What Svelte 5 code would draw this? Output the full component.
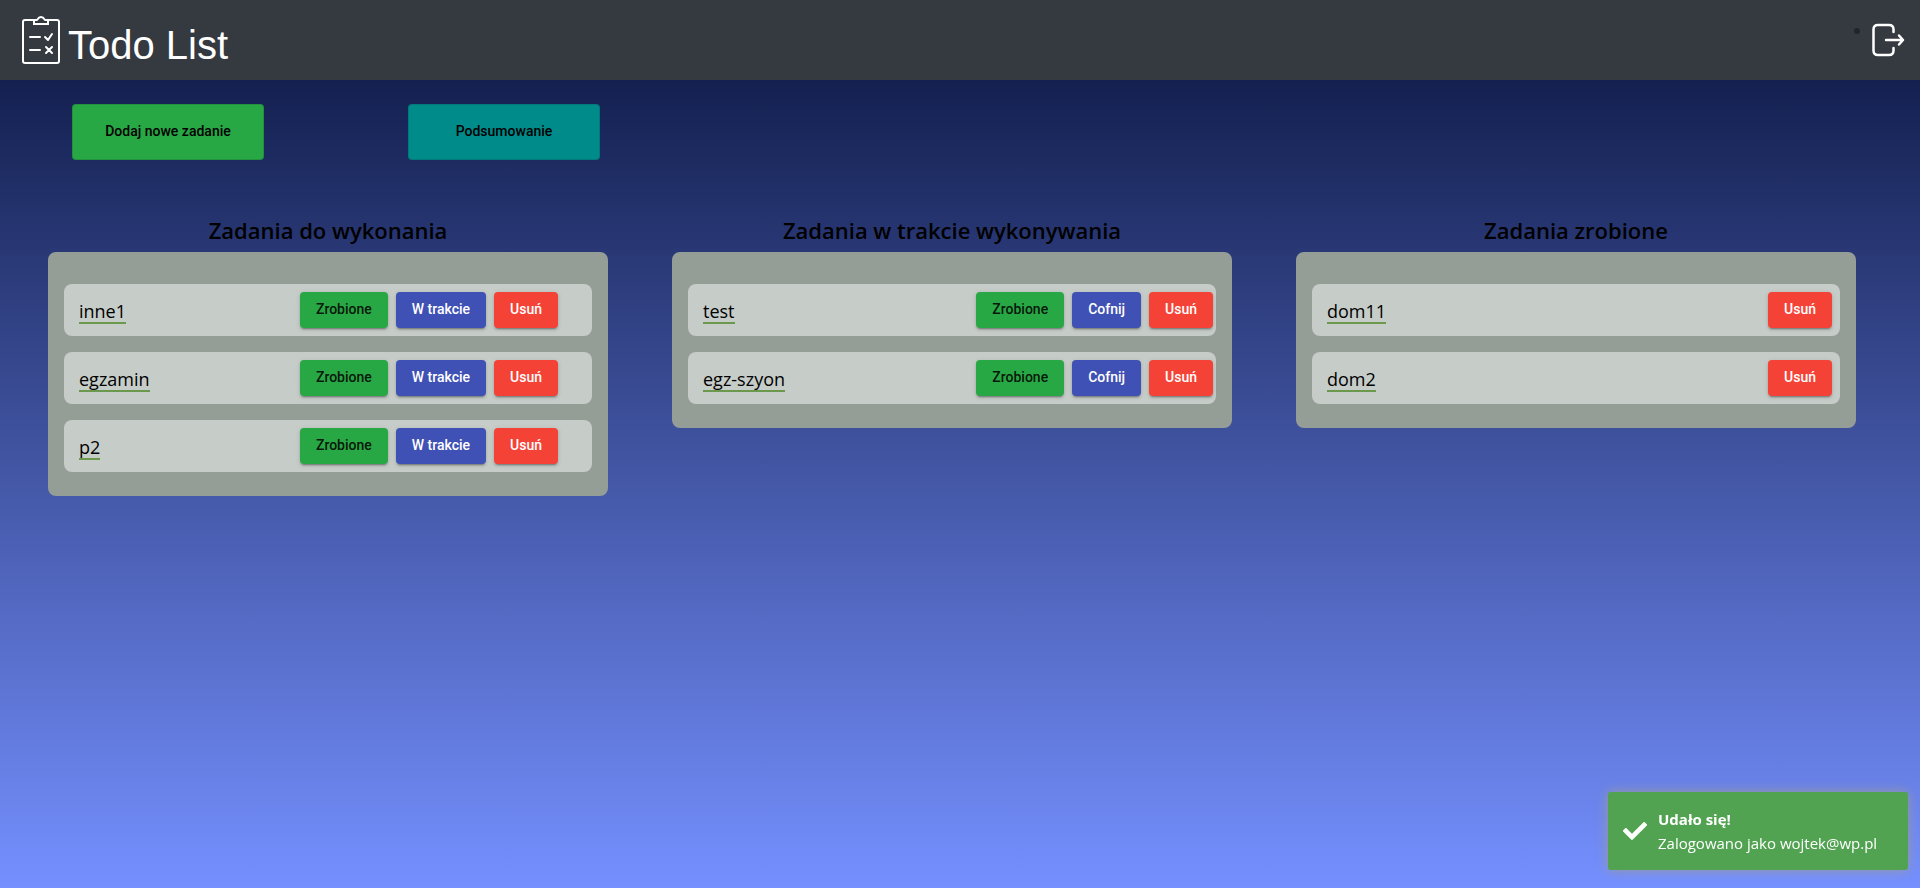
<script>
  let columns = $state([
    {
      key: 'todo',
      title: 'Zadania do wykonania',
      tasks: ['inne1', 'egzamin', 'p2'],
      actions: ['done', 'start', 'remove']
    },
    {
      key: 'doing',
      title: 'Zadania w trakcie wykonywania',
      tasks: ['test', 'egz-szyon'],
      actions: ['done', 'undo', 'remove']
    },
    {
      key: 'finished',
      title: 'Zadania zrobione',
      tasks: ['dom11', 'dom2'],
      actions: ['remove']
    }
  ]);

  const labels = { done: 'Zrobione', start: 'W trakcie', undo: 'Cofnij', remove: 'Usuń' };
  const targets = { done: 2, start: 1, undo: 0 };

  function run(action, column, index) {
    const [task] = column.tasks.splice(index, 1);
    if (action in targets) columns[targets[action]].tasks.push(task);
  }
</script>

<div class="page">
  <header>
    <a class="brand" href="#home">
      <svg width="40" height="50" viewBox="0 0 40 50" fill="none" stroke="#fff" stroke-width="2" stroke-linecap="round" stroke-linejoin="round" aria-hidden="true">
        <path d="M12 5H4Q2 5 2 7V46Q2 48 4 48H36Q38 48 38 46V7Q38 5 36 5H28" />
        <path d="M13 5V9H27V5H24C23 5 23.5 2 20 2S17 5 16 5Z" stroke-linejoin="miter" />
        <path d="M9 22H19M9 35H19M24 22L27 25L31 19M25 32L31 38M31 32L25 38" />
      </svg>
      <span>Todo List</span>
    </a>
    <ul>
      <li>
        <a href="#logout" aria-label="Wyloguj">
          <svg width="34" height="34" viewBox="0 0 34 34" fill="none" stroke="#fff" stroke-width="2.5" stroke-linecap="round" stroke-linejoin="round" aria-hidden="true">
            <path d="M22.5 9V6.500Q22.500 2 18 2H7Q2.500 2 2.500 6.500V27.500Q2.500 32 7 32H18Q22.500 32 22.500 27.500V25M15 17H32M28 12.500L32 17L28 21.500" />
          </svg>
        </a>
      </li>
    </ul>
  </header>

  <div class="toolbar">
    <button class="add">Dodaj nowe zadanie</button>
    <button class="summary">Podsumowanie</button>
  </div>

  <main>
    {#each columns as column (column.key)}
      <section class={column.key}>
        <h2>{column.title}</h2>
        <ul class="panel">
          {#each column.tasks as task, index}
            <li class="task">
              <a href="#task">{task}</a>
              <div class="actions">
                {#each column.actions as action}
                  <button class={action} onclick={() => run(action, column, index)}>{labels[action]}</button>
                {/each}
              </div>
            </li>
          {/each}
        </ul>
      </section>
    {/each}
  </main>

  <div class="toast" role="alert">
    <svg width="24" height="24" viewBox="0 0 512 512" fill="#fff" aria-hidden="true">
      <path d="M173.898 439.404l-166.4-166.4c-9.997-9.997-9.997-26.206 0-36.204l36.203-36.204c9.997-9.998 26.207-9.998 36.204 0L192 312.69 432.095 72.596c9.997-9.997 26.207-9.997 36.204 0l36.203 36.204c9.997 9.997 9.997 26.206 0 36.204l-294.4 294.401c-9.998 9.997-26.207 9.997-36.204-.001z" />
    </svg>
    <div>
      <strong>Udało się!</strong>
      <p>Zalogowano jako wojtek@wp.pl</p>
    </div>
  </div>
</div>

<style>
  .page {
    box-sizing: border-box;
    min-height: 100vh;
    background: linear-gradient(#142050 80px, #7590ff);
    color: #000;
    font-family: 'Open Sans', 'Noto Sans', sans-serif;
  }

  :global(body) {
    margin: 0;
  }

  a {
    color: inherit;
    text-decoration: none;
  }

  ul {
    margin: 0;
    padding: 0;
    list-style: none;
  }

  header {
    display: flex;
    justify-content: space-between;
    height: 80px;
    padding: 0 15px 0 21px;
    background: #343a40;
  }

  .brand {
    display: flex;
    align-items: center;
    gap: 7px;
    color: #fff;
    font-family: 'Liberation Sans', Arial, sans-serif;
    font-size: 40px;
    line-height: 48px;
  }

  .brand span {
    padding-top: 10px;
  }

  header ul,
  header li,
  header li a {
    display: flex;
    align-items: center;
  }

  header li {
    gap: 11px;
  }

  header li::before {
    width: 6px;
    height: 6px;
    margin-bottom: 18px;
    border-radius: 50%;
    background: #212529;
    content: '';
  }

  .toolbar {
    display: flex;
    gap: 144px;
    padding: 24px 72px 0;
  }

  button {
    border: 0;
    border-radius: 4px;
    font: 500 14px/34px Roboto, sans-serif;
    cursor: pointer;
  }

  .toolbar button {
    width: 192px;
    height: 56px;
    padding: 0 16px 2px;
    border: 1px solid rgba(0, 0, 0, 0.12);
    color: #000;
  }

  .add {
    background: #28a745;
  }

  .summary {
    background: #008b8b;
  }

  main {
    display: grid;
    grid-template-columns: repeat(3, 1fr);
    align-items: start;
    gap: 64px;
    padding: 54px 64px 0 48px;
  }

  h2 {
    margin: 0 0 6px;
    font-size: 22px;
    font-weight: 600;
    line-height: 32px;
    text-align: center;
  }

  .panel {
    display: grid;
    gap: 16px;
    padding: 32px 16px 24px;
    border-radius: 8px;
    background: #949e96;
  }

  .task {
    display: flex;
    align-items: center;
    justify-content: space-between;
    height: 52px;
    padding: 0 8px 0 15px;
    border-radius: 8px;
    background: #c6ccc8;
  }

  .todo .task {
    padding-right: 34px;
  }

  .doing .task {
    padding-right: 3px;
  }

  .task a {
    margin-top: 3px;
    border-bottom: 2px solid #6a994e;
    font-size: 18px;
    line-height: 22px;
  }

  .actions {
    display: flex;
    gap: 8px;
  }

  .actions button {
    height: 36px;
    padding: 0 16px 2px;
    box-shadow: 0 3px 1px -2px rgba(0, 0, 0, 0.2), 0 2px 2px rgba(0, 0, 0, 0.14), 0 1px 5px rgba(0, 0, 0, 0.12);
    color: #fff;
  }

  .actions .done {
    background: #28a745;
    color: rgba(0, 0, 0, 0.87);
  }

  .start,
  .undo {
    background: #3f51b5;
  }

  .remove {
    background: #f44336;
  }

  .toast {
    position: fixed;
    right: 12px;
    bottom: 18px;
    display: flex;
    align-items: center;
    gap: 11px;
    box-sizing: border-box;
    width: 300px;
    padding: 15px;
    border-radius: 3px;
    background: #51a351;
    box-shadow: 0 0 12px #999;
    color: #fff;
    font-size: 15px;
    line-height: 24px;
  }

  .toast strong {
    display: block;
  }

  .toast p {
    margin: 0;
    white-space: nowrap;
  }
</style>
